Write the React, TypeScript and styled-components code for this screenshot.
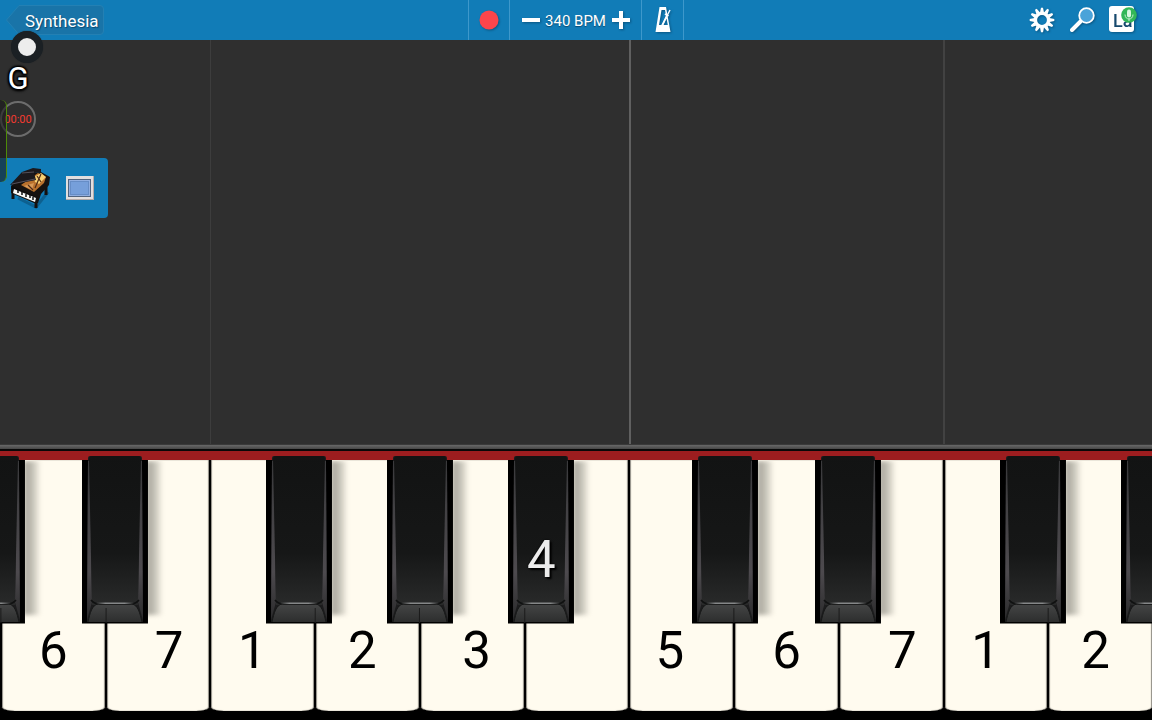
import React from "react";
import styled, { createGlobalStyle } from "styled-components";

const GlobalStyle = createGlobalStyle`
  * { box-sizing: border-box; }
  body { margin: 0; background: #000; font-family: Roboto, "Liberation Sans", sans-serif; }
  button { font: inherit; color: inherit; border: 0; padding: 0; background: none; cursor: pointer; }
`;

const Page = styled.div`
  position: relative;
  display: flex;
  flex-direction: column;
  min-height: 100vh;
  overflow: hidden;
  background: #000;
`;

const Toolbar = styled.header`
  display: grid;
  grid-template-columns: 1fr auto 1fr;
  height: 40px;
  background: #117cb7;
  color: #fff;
`;

const BackButton = styled.button`
  position: relative;
  justify-self: start;
  align-self: center;
  width: 98px;
  height: 30px;
  margin-left: 6px;
  padding-left: 19px;
  text-align: left;
  font-size: 17px;
  line-height: 32px;
  text-shadow: 1px 1px 1px #0a4a72;
`;

const BackShape = styled.svg`
  position: absolute;
  inset: 0;
  width: 100%;
  height: 100%;
`;

const BackLabel = styled.span`
  position: relative;
`;

const Transport = styled.div`
  display: flex;
  border-left: 1px solid #3e98cb;
`;

const TransportGroup = styled.div<{ $width: number }>`
  display: flex;
  align-items: center;
  justify-content: center;
  width: ${(p) => p.$width}px;
  border-right: 1px solid #3e98cb;
`;

const IconButton = styled.button<{ $size: number }>`
  display: flex;
  align-items: center;
  justify-content: center;
  width: ${(p) => p.$size}px;
  height: ${(p) => p.$size}px;
  filter: drop-shadow(1px 1px 1px #0b5682);
`;

const Tempo = styled.output`
  width: 70px;
  text-align: center;
  white-space: nowrap;
  font-size: 15px;
  line-height: 20px;
  padding-top: 2px;
  text-shadow: 0 1px 1px #0a4a72;
`;

const Tools = styled.nav`
  display: flex;
  justify-content: flex-end;
  align-items: center;
  gap: 12px;
  padding-right: 14px;
`;

const Roll = styled.main`
  flex: 1;
  min-height: 200px;
  display: grid;
  grid-template-columns: 2fr 4fr 3fr 2fr;
  padding-left: 1px;
  background: #2f2f2f;
`;

const Measure = styled.div<{ $line?: string; $weight?: number }>`
  border-left: ${(p) => p.$weight ?? 1}px solid ${(p) => p.$line ?? "transparent"};
`;

const Rail = styled.div`
  height: 7px;
  border-top: 1px solid #3a3a3a;
  border-bottom: 2px solid #080808;
  background: linear-gradient(#686868, #464646);
`;

const Side = styled.aside`
  position: absolute;
  top: 31px;
  left: 0;
  width: 108px;
  color: #fff;
`;

const Knob = styled.button`
  display: block;
  width: 32px;
  height: 32px;
  margin-left: 11px;
  border-radius: 50%;
  border: 7px solid #1b2024;
  background: #ededed;
  box-shadow: 0 0 1px #1b2024;
`;

const Chord = styled.div`
  width: 36px;
  text-align: center;
  font-size: 31px;
  line-height: 32px;
  text-shadow: 0 0 2px #000, 1px 1px 2px #000, -1px -1px 2px #000, 1px -1px 2px #000, -1px 1px 2px #000, 0 2px 3px #000;
`;

const Timer = styled.div`
  display: flex;
  justify-content: center;
  width: 36px;
  height: 36px;
  margin-top: 6px;
  border: 2px solid #6c6c6c;
  border-radius: 50%;
  font-size: 11px;
  line-height: 33px;
  color: #f33a30;
`;

const Instrument = styled.div`
  display: flex;
  align-items: center;
  gap: 14px;
  height: 60px;
  margin-top: 21px;
  padding-left: 8px;
  border-radius: 0 4px 4px 0;
  background: #117cb7;
`;

const Drawer = styled.div`
  position: absolute;
  top: 69px;
  left: 0;
  width: 7px;
  height: 82px;
  border-right: 1px solid #4f8a08;
  border-radius: 0 6px 6px 0;
  background: #1a1a1a99;
`;

const Keyboard = styled.section`
  position: relative;
  display: flex;
  height: 269px;
  padding: 9px 0 9px 1px;
  margin-right: -1px;
  background: linear-gradient(#9d1d1f 0 9px, #000 9px);
`;

const KeySlot = styled.div`
  position: relative;
  flex: 1 1 0;
  min-width: 0;
`;

const WhiteKey = styled.button<{ $shift: number }>`
  display: flex;
  justify-content: center;
  align-items: flex-end;
  width: 100%;
  height: 251px;
  padding-bottom: 30px;
  padding-left: ${(p) => Math.max(0, p.$shift)}%;
  padding-right: ${(p) => Math.max(0, -p.$shift)}%;
  border: solid #000;
  border-width: 0 1px;
  border-radius: 0 0 14px 14px / 0 0 4px 4px;
  background: #fffbef;
  box-shadow: inset 1px 0 1px #8f8c84, inset -1px 0 1px #8f8c84;
  color: #000;
  font-size: 51px;
  line-height: 60px;
`;

const BlackKey = styled.button<{ $left: number }>`
  position: absolute;
  z-index: 2;
  top: -4px;
  left: ${(p) => p.$left}%;
  width: 63%;
  height: 168px;
  color: #ececec;
  font-size: 51px;
  line-height: 60px;

  &::after {
    content: "";
    position: absolute;
    z-index: -1;
    left: 98%;
    top: 5px;
    width: 17px;
    height: 154px;
    background: linear-gradient(90deg, #a4a198, #c4c1b6 50%, #fffbef00);
    filter: blur(2px);
    clip-path: inset(0 -6px -6px 0);
  }
`;

const KeyArt = styled.svg`
  position: absolute;
  inset: 0;
  width: 100%;
  height: 100%;
  display: block;
`;

const BlackLabel = styled.span`
  position: absolute;
  left: 1px;
  right: 0;
  top: 74px;
  text-align: center;
  text-shadow: 0 0 2px #000, 2px 2px 2px #000;
`;

type Key = { label: string; shift?: number; black?: number; blackLabel?: string };

const keys: Key[] = [
  { label: "6", black: -40 },
  { label: "7", shift: 21, black: -23 },
  { label: "1", shift: -20 },
  { label: "2", shift: -10, black: -47 },
  { label: "3", shift: 8, black: -31 },
  { label: "", black: -16, blackLabel: "4" },
  { label: "5", shift: -23 },
  { label: "6", black: -40 },
  { label: "7", shift: 21, black: -23 },
  { label: "1", shift: -20 },
  { label: "2", shift: -10, black: -46 },
];

function KeyGradients() {
  return (
    <svg width="0" height="0" aria-hidden="true" style={{ position: "absolute" }}>
      <defs>
        <linearGradient id="body" x1="0" y1="0" x2="0" y2="1">
          <stop offset="0" stopColor="#121313" />
          <stop offset="0.65" stopColor="#161717" />
          <stop offset="1" stopColor="#292a2a" />
        </linearGradient>
        <linearGradient id="cap" x1="0" y1="0" x2="0" y2="1">
          <stop offset="0" stopColor="#454646" />
          <stop offset="1" stopColor="#2d2e2e" />
        </linearGradient>
        <linearGradient id="edge" x1="0" y1="0" x2="0" y2="1">
          <stop offset="0" stopColor="#3a3a3c" />
          <stop offset="0.7" stopColor="#4d4a4e" />
          <stop offset="1" stopColor="#2a2a2b" />
        </linearGradient>
        <linearGradient id="shine" x1="0" y1="0" x2="1" y2="0">
          <stop offset="0" stopColor="#858788" stopOpacity="0" />
          <stop offset="0.25" stopColor="#858788" />
          <stop offset="0.75" stopColor="#858788" />
          <stop offset="1" stopColor="#858788" stopOpacity="0" />
        </linearGradient>
      </defs>
    </svg>
  );
}

function Sharp({ left, label }: { left: number; label?: string }) {
  const crease = (-left / 63) * 66;
  return (
    <BlackKey $left={left} aria-label={label ?? "sharp"}>
      <KeyArt viewBox="0 0 66 168" preserveAspectRatio="none" aria-hidden="true">
        <path d="M0 4H66V167.500H0Z" fill="#000" />
        <path d="M6 2Q6 0 8 0H58Q60 0 60 2L61 166H5Z" fill="#1c1c1d" />
        <path d="M6 5L8 5L10 146L5 164Z" fill="url(#edge)" />
        <path d="M58 5L60 5L61 164L56 146Z" fill="url(#edge)" />
        <path d="M7 3Q7 0 10 0H57Q59 0 59 3L56 149H10Z" fill="url(#body)" />
        <path d="M6 166C8 157 10 148 18 147.500H48C56 148 58 157 60 166Z" fill="url(#cap)" />
        <path d="M9 144Q12 148 18 148H48Q54 148 57 144" fill="none" stroke="#101111" strokeWidth="1.500" />
        <path d="M6 166C8 157 10 149 16 148M50 148C56 149 58 157 60 166" fill="none" stroke="#161717" />
        <rect x="14" y="146.500" width="38" height="1.500" fill="url(#shine)" />
        {crease > 0 && <path d={`M${crease} 152V167`} stroke="#1b1b1b" strokeWidth="1" />}
      </KeyArt>
      {label && <BlackLabel>{label}</BlackLabel>}
    </BlackKey>
  );
}

function Gear() {
  const teeth = Array.from({ length: 12 }, (_, i) => i * 30);
  return (
    <svg width="26" height="26" viewBox="-13 -13 26 26" fill="#fff" aria-hidden="true">
      {teeth.map((a) => (
        <path key={a} d="M-2 -7.500L-1 -12.300H1L2 -7.500Z" transform={`rotate(${a})`} />
      ))}
      <circle r="6.600" fill="none" stroke="#fff" strokeWidth="3.400" />
    </svg>
  );
}

function Magnifier() {
  return (
    <svg width="28" height="28" viewBox="0 0 28 28" aria-hidden="true">
      <path d="M4 24L12.500 15.500" stroke="#fff" strokeWidth="4" strokeLinecap="round" />
      <circle cx="18.500" cy="9.500" r="7.300" fill="#4ba3d9" stroke="#fff" strokeWidth="1.800" />
    </svg>
  );
}

function NoteNames() {
  return (
    <svg width="30" height="30" viewBox="0 0 30 30" aria-hidden="true">
      <rect x="1" y="1" width="25" height="26" rx="3" fill="#fff" />
      <text x="5" y="22" fontFamily="Roboto, sans-serif" fontSize="18" fontWeight="500" fill="#17496d">La</text>
      <circle cx="21" cy="10" r="7.800" fill="#32b757" />
      <rect x="19" y="4.500" width="4" height="8" rx="2" fill="#d8f7df" />
      <path d="M17 9.500C17 15.500 25 15.500 25 9.500M21 13.500V16" fill="none" stroke="#c5efcf" strokeWidth="1" />
    </svg>
  );
}

function Metronome() {
  return (
    <svg width="20" height="28" viewBox="0 0 20 28" aria-hidden="true">
      <path fillRule="evenodd" d="M6.500 1H13L17.500 26H2.500ZM8.500 4L6 19H8.500L13 9.500L12 4ZM13.500 12.500L10.500 19H14.800Z" fill="#fff" />
      <path d="M9 19.500L17 4" stroke="#fff" strokeWidth="1.400" />
      <path d="M12 8L15.500 10" stroke="#fff" strokeWidth="2" />
    </svg>
  );
}

function GrandPiano() {
  return (
    <svg width="44" height="44" viewBox="0 0 44 44" aria-hidden="true">
      <path d="M10 32L28 41L40 26" fill="none" stroke="#0a4468" strokeOpacity=".5" strokeWidth="3" />
      <path d="M5 24V33M28 34V42M38 20V29" stroke="#14100f" strokeWidth="3" />
      <path d="M3 20L14 8L33 6L42 11L41 19L33 28L30 37L26 37L3 27Z" fill="#15110f" />
      <path d="M13 19L30 7L38 11L36 17L26 26Z" fill="#b9712d" />
      <path d="M26 11L33 7L38 11L31 18L27 16Z" fill="#f6cf72" />
      <path d="M16 20L26 17L24 24Z" fill="#d99a58" />
      <path d="M29 10L33 16M33 8L27 22M20 19L25 24" stroke="#4d2a16" strokeWidth="1.200" />
      <path d="M2 19L14 6L25 2L33 3L33 6L26 7L28 14Z" fill="#1b191d" />
      <path d="M4 18L27 13M14 7L26 6" fill="none" stroke="#55505a" strokeWidth="1" />
      <path d="M4 20L28 31L27 33L4 23Z" fill="#0d0b0c" />
      <path d="M6 23L28 32L27 36L5 27Z" fill="#f8f8f6" />
      <path d="M10 24V27M14 26V29M18 28V31M22 29V32M25 31V34" stroke="#111" strokeWidth="1.500" />
    </svg>
  );
}

function Screen() {
  return (
    <svg width="28" height="24" viewBox="0 0 28 24" aria-hidden="true">
      <rect width="28" height="24" fill="#b4aaa8" />
      <rect width="27" height="23" fill="#e2dfdf" />
      <rect x="2.500" y="3.500" width="22" height="17" fill="#90aee0" stroke="#52647e" />
      <rect x="4.500" y="5.500" width="18" height="13" fill="#769fda" stroke="#668dc6" />
    </svg>
  );
}

export default function App() {
  return (
    <Page>
      <GlobalStyle />
      <KeyGradients />
      <Toolbar>
        <BackButton>
          <BackShape viewBox="0 0 98 30" preserveAspectRatio="none" aria-hidden="true">
            <path d="M.5 15L13 .5H94Q97.500 .5 97.500 4V26Q97.500 29.500 94 29.500H13Z" fill="#1974a8" stroke="#2480b3" />
          </BackShape>
          <BackLabel>Synthesia</BackLabel>
        </BackButton>
        <Transport>
          <TransportGroup $width={41}>
            <IconButton $size={24} aria-label="Record">
              <svg width="20" height="20" aria-hidden="true"><circle cx="10" cy="10" r="9.500" fill="#fc454b" /></svg>
            </IconButton>
          </TransportGroup>
          <TransportGroup $width={132}>
            <IconButton $size={20} aria-label="Slower">
              <svg width="18" height="18" aria-hidden="true"><path d="M0 9H18" stroke="#fff" strokeWidth="4" /></svg>
            </IconButton>
            <Tempo>340 BPM</Tempo>
            <IconButton $size={20} aria-label="Faster">
              <svg width="18" height="18" aria-hidden="true"><path d="M0 9H18M9 0V18" stroke="#fff" strokeWidth="4" /></svg>
            </IconButton>
          </TransportGroup>
          <TransportGroup $width={42}>
            <IconButton $size={28} aria-label="Metronome"><Metronome /></IconButton>
          </TransportGroup>
        </Transport>
        <Tools>
          <IconButton $size={28} aria-label="Settings"><Gear /></IconButton>
          <IconButton $size={28} aria-label="Search"><Magnifier /></IconButton>
          <IconButton $size={30} aria-label="Note names"><NoteNames /></IconButton>
        </Tools>
      </Toolbar>
      <Roll>
        <Measure />
        <Measure $line="#3d3d3d" />
        <Measure $line="#606060" $weight={2} />
        <Measure $line="#424242" $weight={2} />
      </Roll>
      <Rail />
      <Keyboard>
        {keys.map((k, i) => (
          <KeySlot key={i}>
            <WhiteKey $shift={k.shift ?? 0}>{k.label}</WhiteKey>
            {k.black !== undefined && <Sharp left={k.black} label={k.blackLabel} />}
            {i === keys.length - 1 && <Sharp left={69} />}
          </KeySlot>
        ))}
      </Keyboard>
      <Side>
        <Knob aria-label="Recorder handle" />
        <Chord>G</Chord>
        <Timer>00:00</Timer>
        <Instrument>
          <GrandPiano />
          <Screen />
        </Instrument>
        <Drawer />
      </Side>
    </Page>
  );
}
